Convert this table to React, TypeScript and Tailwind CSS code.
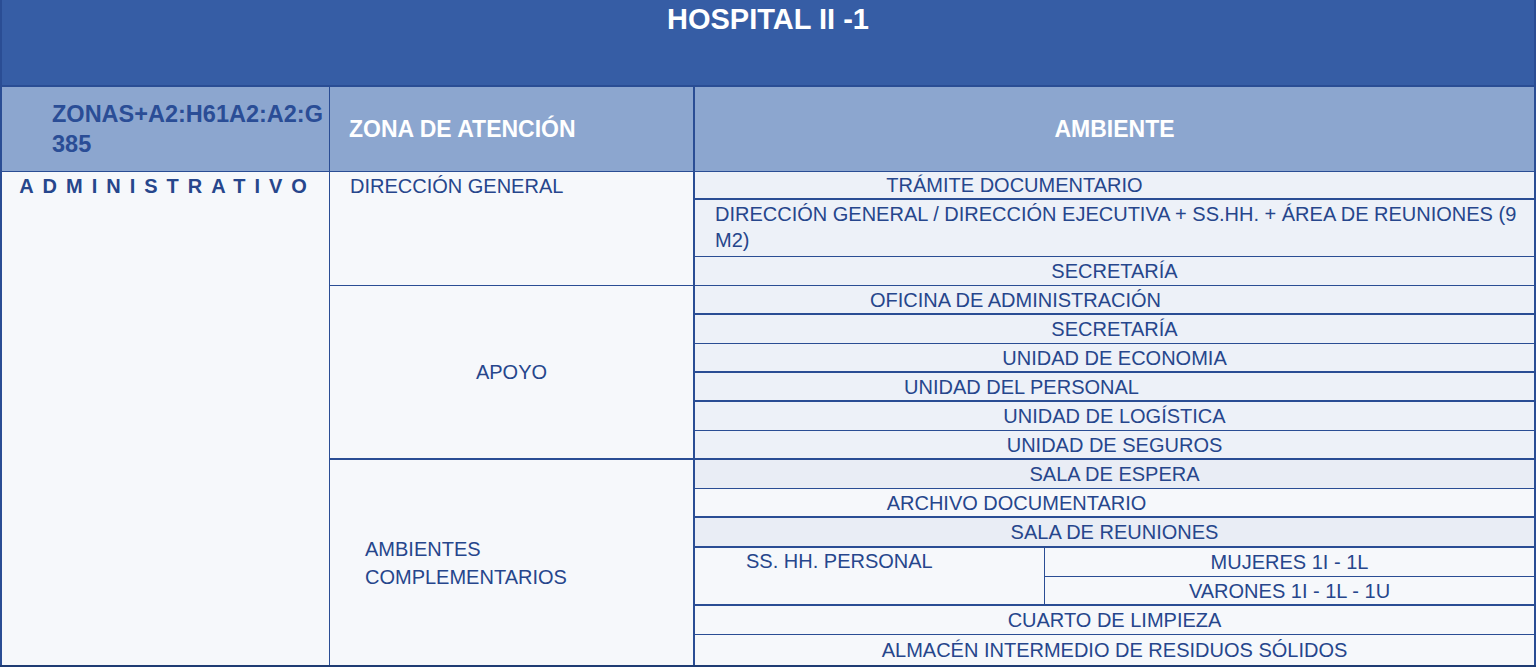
const ink = 'text-[#26468c]';

type Row = { label: string; h: string; bg: string; border: string; align: string };

const seccionDireccion: Row[] = [
  { label: 'TRÁMITE DOCUMENTARIO', h: 'h-[28px]', bg: 'bg-[#edf1f8]', border: 'border-b-2', align: 'justify-center pr-[200px]' },
  { label: '', h: 'h-[57px]', bg: 'bg-[#edf1f8]', border: 'border-b', align: '' },
  { label: 'SECRETARÍA', h: 'h-[29px]', bg: 'bg-[#edf1f8]', border: 'border-b', align: 'justify-center' },
];

const seccionApoyo: Row[] = [
  { label: 'OFICINA DE ADMINISTRACIÓN', h: 'h-[29px]', bg: 'bg-[#edf1f8]', border: 'border-b-2', align: 'justify-center pr-[198px]' },
  { label: 'SECRETARÍA', h: 'h-[29px]', bg: 'bg-[#edf1f8]', border: 'border-b', align: 'justify-center' },
  { label: 'UNIDAD DE ECONOMIA', h: 'h-[29px]', bg: 'bg-[#edf1f8]', border: 'border-b-2', align: 'justify-center' },
  { label: 'UNIDAD DEL PERSONAL', h: 'h-[29px]', bg: 'bg-[#edf1f8]', border: 'border-b-2', align: 'justify-center pr-[186px]' },
  { label: 'UNIDAD DE LOGÍSTICA', h: 'h-[29px]', bg: 'bg-[#edf1f8]', border: 'border-b', align: 'justify-center' },
  { label: 'UNIDAD DE SEGUROS', h: 'h-[29px]', bg: 'bg-[#edf1f8]', border: 'border-b-2', align: 'justify-center' },
];

function Fila({ row }: { row: Row }) {
  return (
    <div className={`flex items-center border-[#2a4d94] ${row.h} ${row.bg} ${row.border} ${row.align}`}>
      <span className="whitespace-nowrap">{row.label}</span>
    </div>
  );
}

export default function App() {
  return (
    <div
      className={`h-[667px] w-[1536px] overflow-hidden bg-[#1f3c73] ${ink}`}
      style={{ fontFamily: '"Liberation Sans", Arial, sans-serif' }}
    >
      <div className="flex h-[665px] flex-col border-l-2 border-r-2 border-[#2a4d94] bg-[#f6f8fb]">
        {/* titulo */}
        <div className="flex h-[87px] justify-center border-b-2 border-[#2a4d94] bg-[#365da5] pt-[3px]">
          <h1 className="text-[29px] leading-[33px] font-bold text-white">HOSPITAL II -1</h1>
        </div>

        {/* encabezado */}
        <div className="flex h-[85px] border-b border-[#2a4d94] bg-[#8ca6cf] text-[23px] font-bold">
          <div className="flex w-[328px] items-center border-r border-[#2a4d94] pl-[50px] text-[23.5px] leading-[30px] text-[#2a4d96]">
            <span>
              ZONAS+A2:H61A2:A2:G
              <br />
              385
            </span>
          </div>
          <div className="flex w-[365px] items-center border-r-2 border-[#2a4d94] pl-[19px] text-white">ZONA DE ATENCIÓN</div>
          <div className="flex flex-1 items-center justify-center text-white">AMBIENTE</div>
        </div>

        {/* cuerpo */}
        <div className="flex flex-1 text-[20px] leading-[26px]">
          <div className="w-[328px] border-r border-[#2a4d94] pt-[1px] pl-[4px] text-center text-[20px] font-bold tracking-[0.45em]">
            ADMINISTRATIVO
          </div>

          <div className="flex flex-1 flex-col">
            {/* direccion general */}
            <div className="flex">
              <div className="w-[365px] border-r-2 border-b border-[#2a4d94] pt-[1px] pl-[20px]">DIRECCIÓN GENERAL</div>
              <div className="flex flex-1 flex-col">
                {seccionDireccion.map((r, i) =>
                  i === 1 ? (
                    <div key={i} className={`border-[#2a4d94] pl-[20px] ${r.h} ${r.bg} ${r.border} pt-[1px] whitespace-nowrap`}>
                      DIRECCIÓN GENERAL / DIRECCIÓN EJECUTIVA + SS.HH. + ÁREA DE REUNIONES (9
                      <br />
                      M2)
                    </div>
                  ) : (
                    <Fila key={i} row={r} />
                  ),
                )}
              </div>
            </div>

            {/* apoyo */}
            <div className="flex">
              <div className="flex w-[365px] items-center justify-center border-r-2 border-b-2 border-[#2a4d94]">APOYO</div>
              <div className="flex flex-1 flex-col">
                {seccionApoyo.map((r, i) => (
                  <Fila key={i} row={r} />
                ))}
              </div>
            </div>

            {/* complementarios */}
            <div className="flex flex-1">
              <div className="flex w-[365px] items-center border-r-2 border-[#2a4d94] pl-[35px] pt-[1px] leading-[28px]">
                <span>
                  AMBIENTES
                  <br />
                  COMPLEMENTARIOS
                </span>
              </div>
              <div className="flex flex-1 flex-col">
                <div className="flex h-[29px] items-center justify-center border-b border-[#2a4d94] bg-[#e9edf5]">SALA DE ESPERA</div>
                <div className="flex h-[29px] items-center justify-center border-b-2 border-[#2a4d94] pr-[196px]">ARCHIVO DOCUMENTARIO</div>
                <div className="flex h-[30px] items-center justify-center border-b-2 border-[#2a4d94] bg-[#e9edf5]">SALA DE REUNIONES</div>
                <div className="flex h-[58px] border-b-2 border-[#2a4d94]">
                  <div className="w-[350px] border-r border-[#2a4d94] pl-[51px]">SS. HH. PERSONAL</div>
                  <div className="flex flex-1 flex-col">
                    <div className="flex h-[29px] items-center justify-center border-b border-[#2a4d94]">MUJERES 1I - 1L</div>
                    <div className="flex flex-1 items-center justify-center">VARONES 1I - 1L - 1U</div>
                  </div>
                </div>
                <div className="flex h-[29px] items-center justify-center border-b border-[#2a4d94]">CUARTO DE LIMPIEZA</div>
                <div className="flex flex-1 items-center justify-center">ALMACÉN INTERMEDIO DE RESIDUOS SÓLIDOS</div>
              </div>
            </div>
          </div>
        </div>
      </div>
    </div>
  );
}
